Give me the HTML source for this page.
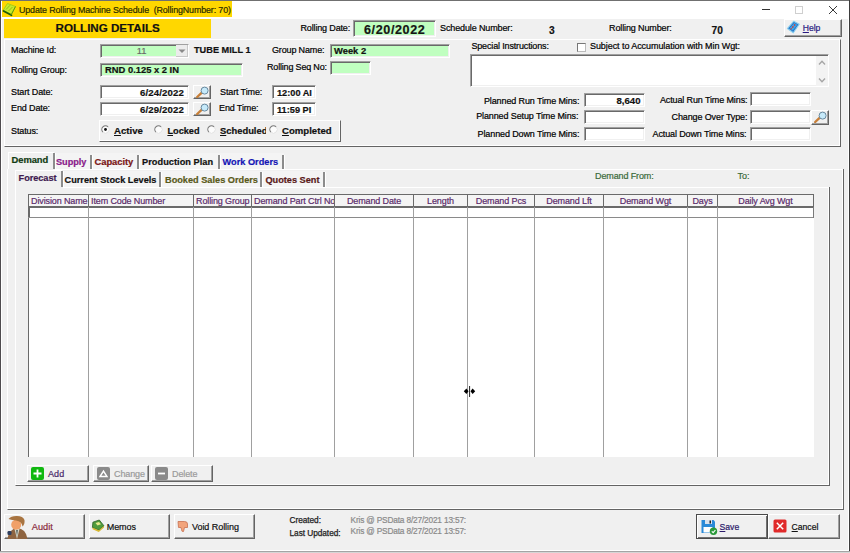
<!DOCTYPE html><html><head><meta charset="utf-8"><style>
html,body{margin:0;padding:0}
body{width:850px;height:553px;overflow:hidden;background:#f0f0f0;position:relative;font-family:"Liberation Sans",sans-serif;}
.a{position:absolute}
.t{position:absolute;white-space:pre;font-family:"Liberation Sans",sans-serif;}
u{text-decoration-thickness:1px;text-underline-offset:0.5px}
.t{-webkit-text-stroke:0.2px currentColor}
</style></head><body>
<div class="a" style="left:0px;top:0px;width:850px;height:1px;background:#707070"></div>
<div class="a" style="left:0px;top:0px;width:1px;height:553px;background:#4e4b4e"></div>
<div class="a" style="left:849px;top:0px;width:1px;height:553px;background:#3c3c3c"></div>
<div class="a" style="left:1px;top:1px;width:1px;height:550px;background:#fff"></div>
<div class="a" style="left:848px;top:1px;width:1px;height:550px;background:#fff"></div>
<div class="a" style="left:1px;top:550px;width:848px;height:1px;background:#fff"></div>
<div class="a" style="left:0px;top:551px;width:850px;height:1px;background:#a4a4a4"></div>
<div class="a" style="left:0px;top:552px;width:850px;height:1px;background:#d6d6d6"></div>
<div class="a" style="left:2px;top:1px;width:846px;height:18px;background:#fff"></div>
<div class="a" style="left:2px;top:1px;width:230px;height:16px;background:#ffd700"></div>
<div class="t" style="left:19px;top:5px;font-size:8.9px;line-height:11px;color:#2b2b00;letter-spacing:-0.12px;">Update Rolling Machine Schedule  (RollingNumber: 70)</div>
<svg class="a" style="left:2px;top:2px" width="15" height="15" viewBox="0 0 15 15"><path d="M5.5 1.5 L13.5 4.5 L9.5 12.5 L1.2 8.2 Z" fill="#c6ea2a" stroke="#9ac810" stroke-width="0.8"/><path d="M1.5 9 L9.5 13.2" stroke="#1e5a08" stroke-width="1.8" stroke-linecap="round"/><path d="M4 7.5 L8 3.3 M6.5 9 L10.5 5" stroke="#86b818" stroke-width="0.9"/><path d="M9 13 L13.5 4.5" stroke="#5a9a10" stroke-width="1"/></svg>
<div class="a" style="left:762px;top:9px;width:8px;height:1px;background:#333"></div>
<div class="a" style="left:795px;top:6px;width:8px;height:8px;border:1px solid #cfcfcf;box-sizing:border-box"></div>
<svg class="a" style="left:828px;top:5px" width="10" height="10" viewBox="0 0 10 10"><path d="M1 1 L9 9 M9 1 L1 9" stroke="#222" stroke-width="0.9"/></svg>
<div class="a" style="left:4px;top:19px;width:207px;height:19px;background:#ffd700"></div>
<div class="t" style="left:55.6px;top:21px;font-size:11.6px;line-height:14px;font-weight:700;color:#111;">ROLLING DETAILS</div>
<div class="t" style="left:300.5px;top:23px;font-size:9px;line-height:11px;letter-spacing:-0.15px;">Rolling Date:</div>
<div class="a" style="left:353px;top:20px;width:83px;height:17px;background:#c0ffc0;border-top:1px solid #a0a0a0;border-left:1px solid #a0a0a0;border-right:1px solid #fff;border-bottom:1px solid #fff;box-sizing:border-box;box-shadow:inset 1px 1px 0 #696969, inset -1px -1px 0 #f0f0f0;"></div>
<div class="t" style="left:364px;top:23px;font-size:12.6px;line-height:15px;font-weight:700;color:#151515;letter-spacing:0.6px;">6/20/2022</div>
<div class="t" style="left:440px;top:23px;font-size:9px;line-height:11px;letter-spacing:-0.12px;">Schedule Number:</div>
<div class="t" style="left:549px;top:25px;font-size:10.2px;line-height:12px;font-weight:700;color:#111;">3</div>
<div class="t" style="left:711.5px;top:25px;font-size:10.2px;line-height:12px;font-weight:700;color:#111;letter-spacing:0.1px;">70</div>
<div class="t" style="left:609px;top:23px;font-size:9px;line-height:11px;letter-spacing:-0.12px;">Rolling Number:</div>
<div class="a" style="left:784px;top:19px;width:58px;height:18px;background:#f0f0f0;border-top:1px solid #fff;border-left:1px solid #fff;border-right:1px solid #646464;border-bottom:1px solid #646464;box-sizing:border-box;box-shadow:inset -1px -1px 0 #a0a0a0;"></div>
<svg class="a" style="left:786px;top:20px" width="15" height="15" viewBox="0 0 15 15"><path d="M1.4 8.5 L7.8 1.2 L13.2 4.3 L7.3 12.8 Z" fill="#2a78c8" stroke="#8ad0f0" stroke-width="1.1" stroke-linejoin="round"/><path d="M3.6 8.3 L8.3 3 L11.2 4.8 L6.8 10.4 Z" fill="#3aa8f0"/><circle cx="8.6" cy="5" r="0.9" fill="#c04848"/><circle cx="6.8" cy="7" r="0.9" fill="#c04848"/><circle cx="5.2" cy="8.8" r="0.8" fill="#c04848"/></svg>
<div class="t" style="left:802.7px;top:23px;font-size:8.6px;line-height:10px;color:#2a1a80;"><u>H</u>elp</div>
<div class="a" style="left:4px;top:39px;width:837px;height:108px;border-top:1px solid #fff;border-left:1px solid #fff;border-right:1px solid #646464;border-bottom:1px solid #646464;box-sizing:border-box;box-shadow:inset -1px -1px 0 #fff;"></div>
<div class="t" style="left:11px;top:45px;font-size:9px;line-height:11px;letter-spacing:-0.12px;">Machine Id:</div>
<div class="a" style="left:100px;top:44px;width:89px;height:14px;background:#c0ffc0;border-top:1px solid #a0a0a0;border-left:1px solid #a0a0a0;border-right:1px solid #fff;border-bottom:1px solid #fff;box-sizing:border-box;box-shadow:inset 1px 1px 0 #696969, inset -1px -1px 0 #f0f0f0;"></div>
<div class="a" style="left:176px;top:45px;width:12px;height:12px;background:#ececec;box-shadow:inset -1px -1px 0 #c8c8c8"></div>
<svg class="a" style="left:177px;top:48px" width="10" height="6" viewBox="0 0 10 6"><path d="M1.5 1.5 L8.5 1.5 L5 5 Z" fill="#8a8a8a"/></svg>
<div class="t" style="left:-8.4px;width:300px;text-align:center;top:45px;font-size:9.4px;line-height:11px;color:#6a6a6a;">11</div>
<div class="t" style="left:194px;top:45px;font-size:9.2px;line-height:11px;font-weight:700;color:#111;">TUBE MILL 1</div>
<div class="t" style="left:11px;top:65px;font-size:9px;line-height:11px;letter-spacing:-0.12px;">Rolling Group:</div>
<div class="a" style="left:100px;top:63px;width:143px;height:14px;background:#c0ffc0;border-top:1px solid #a0a0a0;border-left:1px solid #a0a0a0;border-right:1px solid #fff;border-bottom:1px solid #fff;box-sizing:border-box;box-shadow:inset 1px 1px 0 #696969, inset -1px -1px 0 #f0f0f0;"></div>
<div class="t" style="left:105px;top:64px;font-size:9.4px;line-height:11px;font-weight:700;color:#111;">RND 0.125 x 2 IN</div>
<div class="t" style="left:272px;top:45px;font-size:9px;line-height:11px;letter-spacing:-0.15px;">Group Name:</div>
<div class="a" style="left:330px;top:44px;width:120px;height:14px;background:#c0ffc0;border-top:1px solid #a0a0a0;border-left:1px solid #a0a0a0;border-right:1px solid #fff;border-bottom:1px solid #fff;box-sizing:border-box;box-shadow:inset 1px 1px 0 #696969, inset -1px -1px 0 #f0f0f0;"></div>
<div class="t" style="left:334px;top:45px;font-size:9.4px;line-height:11px;font-weight:700;color:#111;">Week 2</div>
<div class="t" style="left:267px;top:62px;font-size:9px;line-height:11px;letter-spacing:-0.18px;">Rolling Seq No:</div>
<div class="a" style="left:330px;top:61px;width:41px;height:14px;background:#c0ffc0;border-top:1px solid #a0a0a0;border-left:1px solid #a0a0a0;border-right:1px solid #fff;border-bottom:1px solid #fff;box-sizing:border-box;box-shadow:inset 1px 1px 0 #696969, inset -1px -1px 0 #f0f0f0;"></div>
<div class="t" style="left:11px;top:87px;font-size:9px;line-height:11px;letter-spacing:-0.12px;">Start Date:</div>
<div class="a" style="left:100px;top:85px;width:89px;height:14px;background:#fff;border-top:1px solid #a0a0a0;border-left:1px solid #a0a0a0;border-right:1px solid #fff;border-bottom:1px solid #fff;box-sizing:border-box;box-shadow:inset 1px 1px 0 #696969, inset -1px -1px 0 #f0f0f0;"></div>
<div class="t" style="left:-116px;width:300px;text-align:right;top:87px;font-size:9.6px;line-height:12px;font-weight:700;color:#111;letter-spacing:0.15px;">6/24/2022</div>
<div class="t" style="left:11px;top:103px;font-size:9px;line-height:11px;letter-spacing:-0.12px;">End Date:</div>
<div class="a" style="left:100px;top:102px;width:89px;height:14px;background:#fff;border-top:1px solid #a0a0a0;border-left:1px solid #a0a0a0;border-right:1px solid #fff;border-bottom:1px solid #fff;box-sizing:border-box;box-shadow:inset 1px 1px 0 #696969, inset -1px -1px 0 #f0f0f0;"></div>
<div class="t" style="left:-116px;width:300px;text-align:right;top:104px;font-size:9.6px;line-height:12px;font-weight:700;color:#111;letter-spacing:0.15px;">6/29/2022</div>
<div class="a" style="left:193px;top:85px;width:18px;height:14px;background:#f0f0f0;border-top:1px solid #fff;border-left:1px solid #fff;border-right:1px solid #646464;border-bottom:1px solid #646464;box-sizing:border-box;box-shadow:inset -1px -1px 0 #a0a0a0;"></div>
<svg class="a" style="left:195px;top:86px" width="14" height="12" viewBox="0 0 14 12"><line x1="2.2" y1="11" x2="6.8" y2="6.6" stroke="#c8803a" stroke-width="2.4" stroke-linecap="round"/><circle cx="9.6" cy="4.6" r="3.5" fill="#c6eafa" stroke="#6a8aa0" stroke-width="1"/></svg>
<div class="a" style="left:193px;top:102px;width:18px;height:14px;background:#f0f0f0;border-top:1px solid #fff;border-left:1px solid #fff;border-right:1px solid #646464;border-bottom:1px solid #646464;box-sizing:border-box;box-shadow:inset -1px -1px 0 #a0a0a0;"></div>
<svg class="a" style="left:195px;top:103px" width="14" height="12" viewBox="0 0 14 12"><line x1="2.2" y1="11" x2="6.8" y2="6.6" stroke="#c8803a" stroke-width="2.4" stroke-linecap="round"/><circle cx="9.6" cy="4.6" r="3.5" fill="#c6eafa" stroke="#6a8aa0" stroke-width="1"/></svg>
<div class="t" style="left:220px;top:87px;font-size:9px;line-height:11px;letter-spacing:-0.12px;">Start Time:</div>
<div class="a" style="left:272px;top:85px;width:44px;height:14px;background:#fff;border-top:1px solid #a0a0a0;border-left:1px solid #a0a0a0;border-right:1px solid #fff;border-bottom:1px solid #fff;box-sizing:border-box;box-shadow:inset 1px 1px 0 #696969, inset -1px -1px 0 #f0f0f0;"></div>
<div class="t" style="left:277px;top:88px;font-size:9.2px;line-height:11px;font-weight:700;color:#111;">12:00 AI</div>
<div class="t" style="left:219px;top:103px;font-size:9px;line-height:11px;letter-spacing:-0.12px;">End Time:</div>
<div class="a" style="left:272px;top:102px;width:44px;height:14px;background:#fff;border-top:1px solid #a0a0a0;border-left:1px solid #a0a0a0;border-right:1px solid #fff;border-bottom:1px solid #fff;box-sizing:border-box;box-shadow:inset 1px 1px 0 #696969, inset -1px -1px 0 #f0f0f0;"></div>
<div class="t" style="left:277px;top:105px;font-size:9.2px;line-height:11px;font-weight:700;color:#111;">11:59 PI</div>
<div class="t" style="left:11px;top:126px;font-size:9px;line-height:11px;letter-spacing:-0.12px;">Status:</div>
<div class="a" style="left:99px;top:120px;width:242px;height:22px;border-top:1px solid #fff;border-left:1px solid #fff;border-right:1px solid #646464;border-bottom:1px solid #646464;box-sizing:border-box;box-shadow:inset -1px -1px 0 #fff;"></div>
<svg class="a" style="left:101px;top:125px" width="9" height="9" viewBox="0 0 9 9"><circle cx="4.5" cy="4.5" r="3.6" fill="#fcfcfc"/><path d="M7.1 1.9 A3.6 3.6 0 0 0 1.9 7.1" fill="none" stroke="#7a7a7a" stroke-width="1.1"/><path d="M1.9 7.1 A3.6 3.6 0 0 0 7.1 1.9" fill="none" stroke="#e4e4e4" stroke-width="1"/><circle cx="4.5" cy="4.5" r="1.4" fill="#111"/></svg>
<div class="t" style="left:114px;top:125px;font-size:9.6px;line-height:12px;font-weight:700;color:#111;"><u>A</u>ctive</div>
<svg class="a" style="left:154px;top:125px" width="9" height="9" viewBox="0 0 9 9"><circle cx="4.5" cy="4.5" r="3.6" fill="#fcfcfc"/><path d="M7.1 1.9 A3.6 3.6 0 0 0 1.9 7.1" fill="none" stroke="#7a7a7a" stroke-width="1.1"/><path d="M1.9 7.1 A3.6 3.6 0 0 0 7.1 1.9" fill="none" stroke="#e4e4e4" stroke-width="1"/></svg>
<div class="t" style="left:167.4px;top:126px;font-size:9.2px;line-height:11px;font-weight:700;color:#111;"><u>L</u>ocked</div>
<svg class="a" style="left:207px;top:125px" width="9" height="9" viewBox="0 0 9 9"><circle cx="4.5" cy="4.5" r="3.6" fill="#fcfcfc"/><path d="M7.1 1.9 A3.6 3.6 0 0 0 1.9 7.1" fill="none" stroke="#7a7a7a" stroke-width="1.1"/><path d="M1.9 7.1 A3.6 3.6 0 0 0 7.1 1.9" fill="none" stroke="#e4e4e4" stroke-width="1"/></svg>
<div class="a" style="left:220px;top:121px;width:46px;height:19px;overflow:hidden">
<div class="t" style="left:0px;top:4px;font-size:9.4px;line-height:11px;font-weight:700;color:#111;"><u>S</u>cheduled</div>
</div>
<svg class="a" style="left:269px;top:125px" width="9" height="9" viewBox="0 0 9 9"><circle cx="4.5" cy="4.5" r="3.6" fill="#fcfcfc"/><path d="M7.1 1.9 A3.6 3.6 0 0 0 1.9 7.1" fill="none" stroke="#7a7a7a" stroke-width="1.1"/><path d="M1.9 7.1 A3.6 3.6 0 0 0 7.1 1.9" fill="none" stroke="#e4e4e4" stroke-width="1"/></svg>
<div class="t" style="left:282px;top:125px;font-size:9.6px;line-height:12px;font-weight:700;color:#111;"><u>C</u>ompleted</div>
<div class="t" style="left:471.4px;top:41px;font-size:9px;line-height:11px;letter-spacing:-0.15px;">Special Instructions:</div>
<div class="a" style="left:577px;top:43px;width:9px;height:9px;background:#fff;border-top:1px solid #777;border-left:1px solid #777;border-right:1px solid #bbb;border-bottom:1px solid #bbb;box-sizing:border-box"></div>
<div class="t" style="left:590px;top:41px;font-size:9px;line-height:11px;letter-spacing:-0.07px;">Subject to Accumulation with Min Wgt:</div>
<div class="a" style="left:470px;top:54px;width:359px;height:33px;background:#fff;border-top:1px solid #a0a0a0;border-left:1px solid #a0a0a0;border-right:1px solid #fff;border-bottom:1px solid #fff;box-sizing:border-box;box-shadow:inset 1px 1px 0 #696969, inset -1px -1px 0 #f0f0f0;"></div>
<div class="a" style="left:816px;top:56px;width:12px;height:30px;background:#f3f3f3"></div>
<svg class="a" style="left:817px;top:59px" width="10" height="7" viewBox="0 0 10 7"><path d="M2 5.5 L5 2.3 L8 5.5" fill="none" stroke="#a6a6a6" stroke-width="1.4"/></svg>
<svg class="a" style="left:817px;top:77px" width="10" height="7" viewBox="0 0 10 7"><path d="M2 1.5 L5 4.7 L8 1.5" fill="none" stroke="#a6a6a6" stroke-width="1.4"/></svg>
<div class="t" style="left:279.4px;width:300px;text-align:right;top:96px;font-size:9px;line-height:11px;letter-spacing:-0.12px;">Planned Run Time Mins:</div>
<div class="a" style="left:584px;top:93px;width:61px;height:14px;background:#fff;border-top:1px solid #a0a0a0;border-left:1px solid #a0a0a0;border-right:1px solid #fff;border-bottom:1px solid #fff;box-sizing:border-box;box-shadow:inset 1px 1px 0 #696969, inset -1px -1px 0 #f0f0f0;"></div>
<div class="t" style="left:340.5px;width:300px;text-align:right;top:95px;font-size:9.6px;line-height:12px;font-weight:700;color:#111;">8,640</div>
<div class="t" style="left:278.4px;width:300px;text-align:right;top:111px;font-size:9px;line-height:11px;letter-spacing:-0.12px;">Planned Setup Time Mins:</div>
<div class="a" style="left:584px;top:110px;width:61px;height:14px;background:#fff;border-top:1px solid #a0a0a0;border-left:1px solid #a0a0a0;border-right:1px solid #fff;border-bottom:1px solid #fff;box-sizing:border-box;box-shadow:inset 1px 1px 0 #696969, inset -1px -1px 0 #f0f0f0;"></div>
<div class="t" style="left:279.4px;width:300px;text-align:right;top:129px;font-size:9px;line-height:11px;letter-spacing:-0.12px;">Planned Down Time Mins:</div>
<div class="a" style="left:584px;top:127px;width:61px;height:14px;background:#fff;border-top:1px solid #a0a0a0;border-left:1px solid #a0a0a0;border-right:1px solid #fff;border-bottom:1px solid #fff;box-sizing:border-box;box-shadow:inset 1px 1px 0 #696969, inset -1px -1px 0 #f0f0f0;"></div>
<div class="t" style="left:447.4px;width:300px;text-align:right;top:95px;font-size:9px;line-height:11px;letter-spacing:-0.12px;">Actual Run Time Mins:</div>
<div class="a" style="left:750px;top:92px;width:61px;height:14px;background:#fff;border-top:1px solid #a0a0a0;border-left:1px solid #a0a0a0;border-right:1px solid #fff;border-bottom:1px solid #fff;box-sizing:border-box;box-shadow:inset 1px 1px 0 #696969, inset -1px -1px 0 #f0f0f0;"></div>
<div class="t" style="left:447.4px;width:300px;text-align:right;top:112px;font-size:9px;line-height:11px;letter-spacing:-0.12px;">Change Over Type:</div>
<div class="a" style="left:750px;top:110px;width:61px;height:14px;background:#fff;border-top:1px solid #a0a0a0;border-left:1px solid #a0a0a0;border-right:1px solid #fff;border-bottom:1px solid #fff;box-sizing:border-box;box-shadow:inset 1px 1px 0 #696969, inset -1px -1px 0 #f0f0f0;"></div>
<div class="a" style="left:811px;top:110px;width:18px;height:15px;background:#f0f0f0;border-top:1px solid #fff;border-left:1px solid #fff;border-right:1px solid #646464;border-bottom:1px solid #646464;box-sizing:border-box;box-shadow:inset -1px -1px 0 #a0a0a0;"></div>
<svg class="a" style="left:813px;top:111px" width="14" height="12" viewBox="0 0 14 12"><line x1="2.2" y1="11" x2="6.8" y2="6.6" stroke="#c8803a" stroke-width="2.4" stroke-linecap="round"/><circle cx="9.6" cy="4.6" r="3.5" fill="#c6eafa" stroke="#6a8aa0" stroke-width="1"/></svg>
<div class="t" style="left:446.4px;width:300px;text-align:right;top:129px;font-size:9px;line-height:11px;letter-spacing:-0.12px;">Actual Down Time Mins:</div>
<div class="a" style="left:750px;top:127px;width:61px;height:14px;background:#fff;border-top:1px solid #a0a0a0;border-left:1px solid #a0a0a0;border-right:1px solid #fff;border-bottom:1px solid #fff;box-sizing:border-box;box-shadow:inset 1px 1px 0 #696969, inset -1px -1px 0 #f0f0f0;"></div>
<div class="a" style="left:7px;top:169px;width:837px;height:341px;border-left:1px solid #fff;border-right:1px solid #646464;border-bottom:1px solid #646464;box-sizing:border-box;box-shadow:inset -1px -1px 0 #fff;"></div>
<div class="a" style="left:55px;top:169px;width:788px;height:1px;background:#fff"></div>
<div class="a" style="left:54px;top:153px;width:230px;height:16px;background:#f4f4f4"></div>
<div class="a" style="left:8px;top:152px;width:46px;height:17px;border-top:1px solid #fff;border-left:1px solid #fff;box-sizing:border-box"></div>
<div class="t" style="left:11.5px;top:154px;font-size:9.4px;line-height:11px;font-weight:700;color:#0f3a12;letter-spacing:-0.05px;">Demand</div>
<div class="a" style="left:53px;top:153px;width:2px;height:16px;background:#8c8c8c;box-shadow:1px 0 0 #fff"></div>
<div class="t" style="left:56px;top:157px;font-size:9.2px;line-height:11px;font-weight:700;color:#8a1a8a;letter-spacing:-0.05px;">Supply</div>
<div class="a" style="left:90px;top:155px;width:2px;height:14px;background:#8c8c8c;box-shadow:1px 0 0 #fff"></div>
<div class="t" style="left:94.5px;top:156px;font-size:9.4px;line-height:11px;font-weight:700;color:#7a1616;letter-spacing:-0.05px;">Capacity</div>
<div class="a" style="left:137px;top:155px;width:2px;height:14px;background:#8c8c8c;box-shadow:1px 0 0 #fff"></div>
<div class="t" style="left:142px;top:157px;font-size:9.2px;line-height:11px;font-weight:700;color:#111;letter-spacing:0.05px;">Production Plan</div>
<div class="a" style="left:218px;top:155px;width:2px;height:14px;background:#8c8c8c;box-shadow:1px 0 0 #fff"></div>
<div class="t" style="left:222.6px;top:157px;font-size:9.2px;line-height:11px;font-weight:700;color:#1414b4;letter-spacing:0.0px;">Work Orders</div>
<div class="a" style="left:282px;top:155px;width:2px;height:14px;background:#8c8c8c;box-shadow:1px 0 0 #fff"></div>
<div class="a" style="left:15px;top:187px;width:815px;height:299px;border-left:1px solid #fff;border-right:1px solid #646464;border-bottom:1px solid #646464;box-sizing:border-box;box-shadow:inset -1px -1px 0 #fff;"></div>
<div class="a" style="left:63px;top:187px;width:766px;height:1px;background:#fff"></div>
<div class="a" style="left:62px;top:171px;width:263px;height:16px;background:#f4f4f4"></div>
<div class="a" style="left:15px;top:170px;width:47px;height:17px;border-top:1px solid #fff;border-left:1px solid #fff;box-sizing:border-box"></div>
<div class="t" style="left:18.6px;top:173px;font-size:9.2px;line-height:11px;font-weight:700;color:#3f1a4f;letter-spacing:-0.05px;">Forecast</div>
<div class="a" style="left:61px;top:171px;width:2px;height:16px;background:#8c8c8c;box-shadow:1px 0 0 #fff"></div>
<div class="t" style="left:64.5px;top:175px;font-size:9.2px;line-height:11px;font-weight:700;color:#111;letter-spacing:0.0px;">Current Stock Levels</div>
<div class="a" style="left:159px;top:172px;width:2px;height:15px;background:#8c8c8c;box-shadow:1px 0 0 #fff"></div>
<div class="t" style="left:165px;top:175px;font-size:9.2px;line-height:11px;font-weight:700;color:#5a5a1a;letter-spacing:0.0px;">Booked Sales Orders</div>
<div class="a" style="left:260px;top:172px;width:2px;height:15px;background:#8c8c8c;box-shadow:1px 0 0 #fff"></div>
<div class="t" style="left:265.4px;top:175px;font-size:9.2px;line-height:11px;font-weight:700;color:#5a1a1a;letter-spacing:0.0px;">Quotes Sent</div>
<div class="a" style="left:323px;top:172px;width:2px;height:15px;background:#8c8c8c;box-shadow:1px 0 0 #fff"></div>
<div class="t" style="left:595px;top:171px;font-size:9px;line-height:11px;color:#3a6a3a;letter-spacing:-0.12px;">Demand From:</div>
<div class="t" style="left:737.5px;top:171px;font-size:9px;line-height:11px;color:#3a6a3a;">To:</div>
<div class="a" style="left:28px;top:194px;width:786px;height:263px;background:#fff"></div>
<div class="a" style="left:28px;top:194px;width:786px;height:13px;background:#f4f4f4"></div>
<div class="a" style="left:28px;top:194px;width:786px;height:1px;background:#6a6a6a"></div>
<div class="a" style="left:28px;top:206px;width:786px;height:2px;background:#6a6a6a"></div>
<div class="a" style="left:28px;top:194px;width:1px;height:263px;background:#6a6a6a"></div>
<div class="a" style="left:29px;top:208px;width:1px;height:10px;background:#6a6a6a"></div>
<div class="a" style="left:28px;top:217px;width:786px;height:1px;background:#8a8a8a"></div>
<div class="a" style="left:813px;top:207px;width:1px;height:11px;background:#7a7a7a"></div>
<div class="a" style="left:88px;top:194px;width:1px;height:263px;background:#a0a0a0"></div>
<div class="a" style="left:88px;top:194px;width:1px;height:13px;background:#6a6a6a"></div>
<div class="a" style="left:193px;top:194px;width:1px;height:263px;background:#a0a0a0"></div>
<div class="a" style="left:193px;top:194px;width:1px;height:13px;background:#6a6a6a"></div>
<div class="a" style="left:251px;top:194px;width:1px;height:263px;background:#a0a0a0"></div>
<div class="a" style="left:251px;top:194px;width:1px;height:13px;background:#6a6a6a"></div>
<div class="a" style="left:334px;top:194px;width:1px;height:263px;background:#a0a0a0"></div>
<div class="a" style="left:334px;top:194px;width:1px;height:13px;background:#6a6a6a"></div>
<div class="a" style="left:413px;top:194px;width:1px;height:263px;background:#a0a0a0"></div>
<div class="a" style="left:413px;top:194px;width:1px;height:13px;background:#6a6a6a"></div>
<div class="a" style="left:467px;top:194px;width:1px;height:263px;background:#a0a0a0"></div>
<div class="a" style="left:467px;top:194px;width:1px;height:13px;background:#6a6a6a"></div>
<div class="a" style="left:534px;top:194px;width:1px;height:263px;background:#a0a0a0"></div>
<div class="a" style="left:534px;top:194px;width:1px;height:13px;background:#6a6a6a"></div>
<div class="a" style="left:603px;top:194px;width:1px;height:263px;background:#a0a0a0"></div>
<div class="a" style="left:603px;top:194px;width:1px;height:13px;background:#6a6a6a"></div>
<div class="a" style="left:687px;top:194px;width:1px;height:263px;background:#a0a0a0"></div>
<div class="a" style="left:687px;top:194px;width:1px;height:13px;background:#6a6a6a"></div>
<div class="a" style="left:717px;top:194px;width:1px;height:263px;background:#a0a0a0"></div>
<div class="a" style="left:717px;top:194px;width:1px;height:13px;background:#6a6a6a"></div>
<div class="a" style="left:813px;top:194px;width:1px;height:13px;background:#6a6a6a"></div>
<div class="a" style="left:29px;top:195px;width:59px;height:11px;overflow:hidden">
<div class="t" style="left:2px;top:1px;font-size:9px;line-height:11px;color:#5a2a6a;letter-spacing:-0.12px;">Division Name</div>
</div>
<div class="a" style="left:89px;top:195px;width:104px;height:11px;overflow:hidden">
<div class="t" style="left:2px;top:1px;font-size:9px;line-height:11px;color:#5a2a6a;letter-spacing:-0.12px;">Item Code Number</div>
</div>
<div class="a" style="left:194px;top:195px;width:57px;height:11px;overflow:hidden">
<div class="t" style="left:2px;top:1px;font-size:9px;line-height:11px;color:#5a2a6a;letter-spacing:-0.12px;">Rolling Group</div>
</div>
<div class="a" style="left:252px;top:195px;width:82px;height:11px;overflow:hidden">
<div class="t" style="left:2px;top:1px;font-size:9px;line-height:11px;color:#5a2a6a;letter-spacing:-0.12px;">Demand Part Ctrl No</div>
</div>
<div class="a" style="left:335px;top:195px;width:78px;height:11px;overflow:hidden">
<div class="t" style="left:-111px;width:300px;text-align:center;top:1px;font-size:9px;line-height:11px;color:#5a2a6a;letter-spacing:-0.12px;">Demand Date</div>
</div>
<div class="a" style="left:414px;top:195px;width:53px;height:11px;overflow:hidden">
<div class="t" style="left:-123.5px;width:300px;text-align:center;top:1px;font-size:9px;line-height:11px;color:#5a2a6a;letter-spacing:-0.12px;">Length</div>
</div>
<div class="a" style="left:468px;top:195px;width:66px;height:11px;overflow:hidden">
<div class="t" style="left:-117px;width:300px;text-align:center;top:1px;font-size:9px;line-height:11px;color:#5a2a6a;letter-spacing:-0.12px;">Demand Pcs</div>
</div>
<div class="a" style="left:535px;top:195px;width:68px;height:11px;overflow:hidden">
<div class="t" style="left:-116px;width:300px;text-align:center;top:1px;font-size:9px;line-height:11px;color:#5a2a6a;letter-spacing:-0.12px;">Demand Lft</div>
</div>
<div class="a" style="left:604px;top:195px;width:83px;height:11px;overflow:hidden">
<div class="t" style="left:-108.5px;width:300px;text-align:center;top:1px;font-size:9px;line-height:11px;color:#5a2a6a;letter-spacing:-0.12px;">Demand Wgt</div>
</div>
<div class="a" style="left:688px;top:195px;width:29px;height:11px;overflow:hidden">
<div class="t" style="left:-135.5px;width:300px;text-align:center;top:1px;font-size:9px;line-height:11px;color:#5a2a6a;letter-spacing:-0.12px;">Days</div>
</div>
<div class="a" style="left:718px;top:195px;width:95px;height:11px;overflow:hidden">
<div class="t" style="left:-102.5px;width:300px;text-align:center;top:1px;font-size:9px;line-height:11px;color:#5a2a6a;letter-spacing:-0.12px;">Daily Avg Wgt</div>
</div>
<div class="a" style="left:27px;top:465px;width:62px;height:17px;background:#f0f0f0;border-top:1px solid #fff;border-left:1px solid #fff;border-right:1px solid #646464;border-bottom:1px solid #646464;box-sizing:border-box;box-shadow:inset -1px -1px 0 #a0a0a0;"></div>
<svg class="a" style="left:31px;top:467px" width="13" height="13" viewBox="0 0 13 13"><rect x="0" y="0" width="13" height="13" fill="#10b810" rx="2"/><path d="M6.5 2.5 V10.5 M2.5 6.5 H10.5" stroke="#fff" stroke-width="1.8"/></svg>
<div class="t" style="left:48px;top:469px;font-size:9px;line-height:11px;color:#4a2a6a;letter-spacing:0.1px;">Add</div>
<div class="a" style="left:93px;top:465px;width:56px;height:17px;background:#f0f0f0;border-top:1px solid #fff;border-left:1px solid #fff;border-right:1px solid #646464;border-bottom:1px solid #646464;box-sizing:border-box;box-shadow:inset -1px -1px 0 #a0a0a0;"></div>
<svg class="a" style="left:97px;top:467px" width="13" height="13" viewBox="0 0 13 13"><rect x="0" y="0" width="13" height="13" fill="#8a8a8a" rx="2"/><path d="M3 9.5 L6.5 4 L10 9.5 Z" fill="none" stroke="#fff" stroke-width="1.4"/></svg>
<div class="t" style="left:114px;top:469px;font-size:9px;line-height:11px;color:#9a9a9a;letter-spacing:-0.1px;">Change</div>
<div class="a" style="left:151px;top:465px;width:62px;height:17px;background:#f0f0f0;border-top:1px solid #fff;border-left:1px solid #fff;border-right:1px solid #646464;border-bottom:1px solid #646464;box-sizing:border-box;box-shadow:inset -1px -1px 0 #a0a0a0;"></div>
<svg class="a" style="left:155px;top:467px" width="13" height="13" viewBox="0 0 13 13"><rect x="0" y="0" width="13" height="13" fill="#8a8a8a" rx="2"/><path d="M3 6.5 H10" stroke="#fff" stroke-width="1.8"/></svg>
<div class="t" style="left:172px;top:469px;font-size:9px;line-height:11px;color:#9a9a9a;letter-spacing:-0.1px;">Delete</div>
<div class="a" style="left:4px;top:514px;width:81px;height:25px;background:#f0f0f0;border-top:1px solid #fff;border-left:1px solid #fff;border-right:1px solid #646464;border-bottom:1px solid #646464;box-sizing:border-box;box-shadow:inset -1px -1px 0 #a0a0a0;"></div>
<svg class="a" style="left:5px;top:515px" width="24" height="24" viewBox="0 0 24 24"><path d="M2.5 24 Q4 14 12 13 Q21 13.5 22.5 24Z" fill="#8e6440"/><path d="M9.5 14 L12 24 L14.5 14Z" fill="#d8d8c8"/><path d="M11.3 15 L12 21 L12.7 15Z" fill="#2a3a3a"/><circle cx="11.2" cy="9.8" r="5" fill="#f0a068"/><path d="M3.5 4 Q6 0.8 12 1 Q18 1.2 19.5 5 Q20 9 17.5 11.5 Q17 6.5 11 5.5 Q7 5.2 3.5 4Z" fill="#a87440"/><rect x="2.5" y="16" width="4" height="4" rx="1.2" fill="#2e3e5e"/></svg>
<div class="t" style="left:31.8px;top:522px;font-size:9.2px;line-height:11px;color:#8a2a3a;">Audit</div>
<div class="a" style="left:89px;top:514px;width:81px;height:25px;background:#f0f0f0;border-top:1px solid #fff;border-left:1px solid #fff;border-right:1px solid #646464;border-bottom:1px solid #646464;box-sizing:border-box;box-shadow:inset -1px -1px 0 #a0a0a0;"></div>
<svg class="a" style="left:91px;top:519px" width="14" height="14" viewBox="0 0 14 14"><path d="M1.9 3.2 L8.3 1 L13 6.9 L7.8 11.2 L1.4 8.5 Z" fill="#4e9a3c" stroke="#2a6020" stroke-width="0.8" stroke-linejoin="round"/><path d="M1.4 8.5 L7.8 11.2 L13 6.9 L13 8.6 L7.8 13 L1.6 10.2 Z" fill="#d8b830"/><path d="M4.5 4 L8 3 L10 5.3 L6.5 6.5Z" fill="#e6e88a"/></svg>
<div class="t" style="left:106.7px;top:522px;font-size:9px;line-height:11px;color:#111;letter-spacing:-0.05px;">Memos</div>
<div class="a" style="left:174px;top:514px;width:81px;height:25px;background:#f0f0f0;border-top:1px solid #fff;border-left:1px solid #fff;border-right:1px solid #646464;border-bottom:1px solid #646464;box-sizing:border-box;box-shadow:inset -1px -1px 0 #a0a0a0;"></div>
<svg class="a" style="left:177px;top:520px" width="12" height="13" viewBox="0 0 12 13"><path d="M1 1.5 H7.5 Q10.5 1.5 10.5 4 V7.5 H7.5 L6.5 11.5 Q4.5 12 4.5 9.5 L4 7.5 H1.5 Z" fill="#f2a47c" stroke="#c87050" stroke-width="0.8"/></svg>
<div class="t" style="left:192px;top:522px;font-size:9px;line-height:11px;color:#111;letter-spacing:-0.05px;">Void Rolling</div>
<div class="t" style="left:289.5px;top:515px;font-size:8.3px;line-height:10px;color:#222;letter-spacing:-0.05px;-webkit-text-stroke:0.25px #222;">Created:</div>
<div class="t" style="left:289.5px;top:528px;font-size:8.3px;line-height:10px;color:#222;letter-spacing:-0.05px;-webkit-text-stroke:0.25px #222;">Last Updated:</div>
<div class="t" style="left:350.6px;top:515px;font-size:8.3px;line-height:10px;color:#8a8a8a;letter-spacing:-0.17px;">Kris @ PSData 8/27/2021 13:57:</div>
<div class="t" style="left:350.6px;top:526px;font-size:8.3px;line-height:10px;color:#8a8a8a;letter-spacing:-0.17px;">Kris @ PSData 8/27/2021 13:57:</div>
<div class="a" style="left:696px;top:514px;width:72px;height:25px;background:#f0f0f0;border:1px solid #4a4a4a;box-sizing:border-box;box-shadow:inset 1px 1px 0 #fff, inset -1px -1px 0 #707070"></div>
<svg class="a" style="left:701px;top:519px" width="17" height="16" viewBox="0 0 17 16"><path d="M0.5 1 H12.5 L14 2.5 V14 H0.5 Z" fill="#2a8ad8"/><rect x="4" y="1" width="7" height="4" fill="#d8e2ee"/><rect x="8.5" y="1.5" width="1.5" height="3" fill="#222"/><rect x="2.5" y="8" width="9" height="5.5" fill="#fff"/><circle cx="12.5" cy="12.3" r="3.7" fill="#2a9a3a"/><path d="M10.8 12.3 L12.2 13.7 L14.4 11" stroke="#fff" stroke-width="1.1" fill="none"/></svg>
<div class="t" style="left:719.6px;top:522px;font-size:8.6px;line-height:10px;color:#2a1a6a;"><u>S</u>ave</div>
<div class="a" style="left:768px;top:514px;width:72px;height:25px;background:#f0f0f0;border-top:1px solid #fff;border-left:1px solid #fff;border-right:1px solid #646464;border-bottom:1px solid #646464;box-sizing:border-box;box-shadow:inset -1px -1px 0 #a0a0a0;"></div>
<svg class="a" style="left:773px;top:519px" width="14" height="14" viewBox="0 0 14 14"><rect x="0.5" y="0.5" width="13" height="13" fill="#e02a2a" rx="1.5"/><path d="M3.8 3.8 L10.2 10.2 M10.2 3.8 L3.8 10.2" stroke="#fff" stroke-width="1.5"/></svg>
<div class="t" style="left:791.6px;top:522px;font-size:8.6px;line-height:10px;color:#111;"><u>C</u>ancel</div>
<svg class="a" style="left:460px;top:383px" width="18" height="16" viewBox="0 0 18 16"><path d="M3.8 8.3 L6.4 5.6 L8.5 8.3 L6.4 11 Z" fill="#000"/><path d="M10.5 8.3 L12.6 5.6 L15.2 8.3 L12.6 11 Z" fill="#000"/><rect x="9" y="3" width="1.1" height="11" fill="#333"/></svg>
</body></html>
